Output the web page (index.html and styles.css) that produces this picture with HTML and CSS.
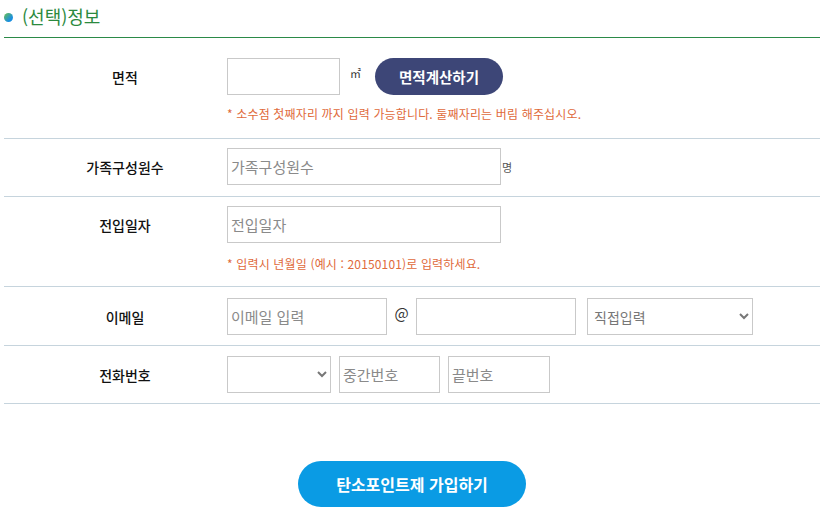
FILE: index.html
```html
<!DOCTYPE html>
<html lang="ko">
<head>
<meta charset="utf-8">
<link rel="stylesheet" href="styles.css">
</head>
<body>
<div class="wrap">
  <h2 class="title"><span class="dot"></span>(선택)정보</h2>
  <div class="form">
    <div class="row r1">
      <div class="label">면적</div>
      <div class="field">
        <div class="line">
          <input class="inp w112" type="text">
          <span class="unit">㎡</span>
          <button class="calc" type="button">면적계산하기</button>
        </div>
        <p class="note">* 소수점 첫째자리 까지 입력 가능합니다. 둘째자리는 버림 해주십시오.</p>
      </div>
    </div>
    <div class="row r2">
      <div class="label">가족구성원수</div>
      <div class="field">
        <div class="line">
          <input class="inp w274" type="text" placeholder="가족구성원수">
          <span class="unit2">명</span>
        </div>
      </div>
    </div>
    <div class="row r3">
      <div class="label">전입일자</div>
      <div class="field">
        <div class="line">
          <input class="inp w274" type="text" placeholder="전입일자">
        </div>
        <p class="note">* 입력시 년월일 (예시 : 20150101)로 입력하세요.</p>
      </div>
    </div>
    <div class="row r4">
      <div class="label">이메일</div>
      <div class="field">
        <div class="line">
          <input class="inp w160" type="text" placeholder="이메일 입력">
          <span class="at">@</span>
          <input class="inp w160" type="text">
          <select class="sel w166 ml12"><option>직접입력</option></select>
        </div>
      </div>
    </div>
    <div class="row r5">
      <div class="label">전화번호</div>
      <div class="field">
        <div class="line g8">
          <select class="sel w104"><option></option></select>
          <input class="inp w102" type="text" placeholder="중간번호">
          <input class="inp w103" type="text" placeholder="끝번호">
        </div>
      </div>
    </div>
  </div>
  <div class="actions">
    <button class="join" type="button">탄소포인트제 가입하기</button>
  </div>
</div>
</body>
</html>
```
FILE: styles.css
```css
* { box-sizing: border-box; }
html, body { margin: 0; padding: 0; background: #fff; }
body {
  font-family: "Noto Sans CJK KR", "Noto Sans", sans-serif;
  color: #222;
}
.wrap { width: 816px; margin-left: 4px; }
.title {
  margin: 0;
  height: 38px;
  padding-top: 3px;
  display: flex;
  align-items: flex-start;
  font-size: 18px;
  font-weight: 400;
  line-height: 26px;
  color: #2b8a3e;
  border-bottom: 1px solid #2b8a47;
}
.dot {
  width: 9px; height: 9px; border-radius: 50%;
  background: linear-gradient(135deg, #6cc04a 0%, #1a8fe0 70%);
  margin: 10px 9px 0 0;
  flex: none;
}
.row {
  display: flex;
  border-bottom: 1px solid #c6d4dd;
}
.label {
  width: 223px;
  flex: none;
  padding-left: 19px;
  height: 37px;
  display: flex;
  align-items: center;
  justify-content: center;
  font-size: 14px;
  font-weight: 500;
  color: #111;
}
.r1 { padding: 20px 0 15px; }
.r2 { padding: 9px 0 11px; }
.r3 { padding: 9px 0 13px; }
.r4 { padding: 11px 0 10px; }
.r5 { padding: 10px 0 10px; }
.line { display: flex; align-items: center; height: 37px; }
.g8 { gap: 8px; }
.inp, .sel {
  height: 37px;
  border: 1px solid #c9c9c9;
  background: #fff;
  font-family: inherit;
  font-size: 15px;
  color: #333;
  padding: 0 3px;
  border-radius: 0;
  outline: none;
}
.inp::placeholder { color: #8a8a8a; }
.sel { color: #777; padding-left: 2px; font-size: 14px; }
.w112 { width: 113px; }
.w274 { width: 274px; }
.w160 { width: 160px; }
.w166 { width: 166px; }
.w104 { width: 104px; }
.w102 { width: 101px; }
.w103 { width: 102px; }
.ml12 { margin-left: 11px; }
.unit { font-size: 11px; margin: 0 14px 0 10px; color: #333; position: relative; top: -4px; }
.unit2 { font-size: 11px; color: #555; margin-left: 1px; }
.at { font-size: 15px; width: 29px; text-align: center; color: #333; position: relative; top: -4px; }
.calc {
  width: 128px; height: 37px;
  border: 0; border-radius: 19px;
  background: #3d4677;
  color: #fff;
  font-family: inherit;
  font-size: 14.5px;
  font-weight: 700;
  padding: 0;
}
.note {
  margin: 10px 0 0;
  font-size: 12px;
  line-height: 18px;
  letter-spacing: 0.15px;
  color: #e06a3b;
}
.r3 .note { margin-top: 12px; }
.actions {
  display: flex;
  justify-content: center;
  padding-top: 57px;
}
.join {
  width: 228px; height: 46px;
  border: 0; border-radius: 23px;
  background: #0a9be4;
  color: #fff;
  font-family: inherit;
  font-size: 16px;
  font-weight: 700;
}
```
